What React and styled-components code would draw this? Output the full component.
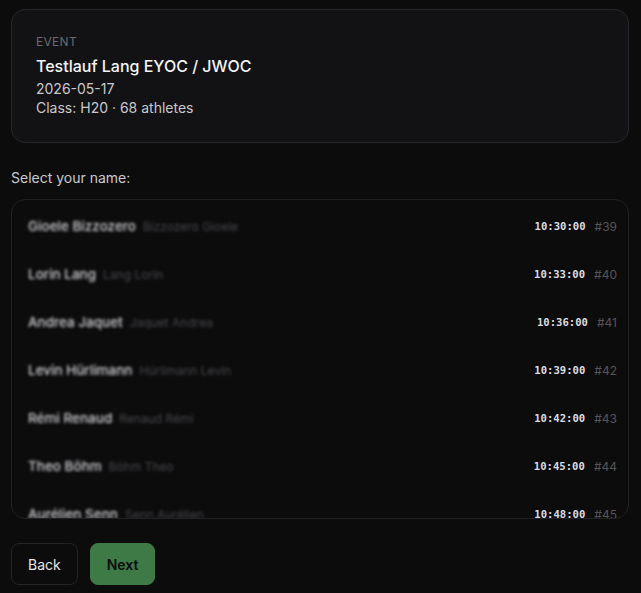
import React from 'react';
import styled, { createGlobalStyle } from 'styled-components';

const GlobalStyle = createGlobalStyle`
    body {
        margin: 0;
        background: #0c0c0d;
        font-family: Inter, "Noto Sans", sans-serif;
        color: #e6e6e6;
    }
`

const Page = styled.div`
    display: flex;
    flex-direction: column;
    padding: 9px 12px 0 11px;
`

const EventCard = styled.section`
    display: flex;
    flex-direction: column;
    padding: 24px 24px 25px 24px;
    background: #121214;
    border: 1px solid #26262a;
    border-radius: 14px;
`

const Eyebrow = styled.div`
    font-size: 12px;
    line-height: 16px;
    letter-spacing: 0.3px;
    text-transform: uppercase;
    color: #6a6a6e;
`

const EventTitle = styled.div`
    margin-top: 5px;
    font-size: 16px;
    line-height: 22px;
    font-weight: 500;
    color: #f4f4f5;
`

const Meta = styled.div`
    margin-top: ${p => p.gap || 0}px;
    font-size: 14px;
    line-height: 19px;
    color: #c9c9cc;
`

const Prompt = styled.div`
    margin-top: 25px;
    font-size: 14px;
    line-height: 20px;
    color: #c9c9cc;
`

const List = styled.div`
    margin-top: 11px;
    height: 320px;
    padding-top: 2px;
    box-sizing: border-box;
    overflow: hidden;
    border: 1px solid #222225;
    border-radius: 14px;
    background: #0c0c0d;
`

const Row = styled.div`
    display: flex;
    align-items: center;
    height: 48px;
    padding: 0 11px 0 16px;
    box-sizing: border-box;
`

const Names = styled.div`
    display: flex;
    align-items: baseline;
    gap: 7px;
    flex: 1;
    filter: blur(1.4px);
`

const Name = styled.span`
    font-size: 13.5px;
    font-weight: 500;
    color: #d4d4d8;
`

const Alias = styled.span`
    font-size: 12px;
    color: #48484c;
`

const Start = styled.span`
    font-family: "DejaVu Sans Mono", "Liberation Mono", monospace;
    font-size: 10.6px;
    font-weight: 600;
    color: #dcdce0;
`

const Bib = styled.span`
    margin-left: 9px;
    font-size: 12px;
    color: #55555a;
`

const Actions = styled.div`
    display: flex;
    gap: 12px;
    margin-top: 24px;
`

const Button = styled.button`
    height: 42px;
    padding: 0 16px;
    border-radius: 8px;
    font-family: Inter, "Noto Sans", sans-serif;
    font-size: 14px;
    font-weight: ${p => p.primary ? 600 : 400};
    color: ${p => p.primary ? '#0d0d0d' : '#e6e6e6'};
    background: ${p => p.primary ? '#3d7a45' : 'transparent'};
    border: 1px solid ${p => p.primary ? '#3d7a45' : '#242427'};
    cursor: pointer;
`

const athletes = [
    { name: 'Gioele Bizzozero', alias: 'Bizzozero Gioele', start: '10:30:00', bib: 39 },
    { name: 'Lorin Lang', alias: 'Lang Lorin', start: '10:33:00', bib: 40 },
    { name: 'Andrea Jaquet', alias: 'Jaquet Andrea', start: '10:36:00', bib: 41 },
    { name: 'Levin Hürlimann', alias: 'Hürlimann Levin', start: '10:39:00', bib: 42 },
    { name: 'Rémi Renaud', alias: 'Renaud Rémi', start: '10:42:00', bib: 43 },
    { name: 'Theo Böhm', alias: 'Böhm Theo', start: '10:45:00', bib: 44 },
    { name: 'Aurélien Senn', alias: 'Senn Aurélien', start: '10:48:00', bib: 45 },
    { name: 'Noah Keller', alias: 'Keller Noah', start: '10:51:00', bib: 46 },
]

export default function App() {
    return (
        <Page>
            <GlobalStyle />
            <EventCard>
                <Eyebrow>Event</Eyebrow>
                <EventTitle>Testlauf Lang EYOC / JWOC</EventTitle>
                <Meta gap={2}>2026-05-17</Meta>
                <Meta>Class: H20 · 68 athletes</Meta>
            </EventCard>
            <Prompt>Select your name:</Prompt>
            <List>
                {athletes.map(a => (
                    <Row key={a.bib}>
                        <Names>
                            <Name>{a.name}</Name>
                            <Alias>{a.alias}</Alias>
                        </Names>
                        <Start>{a.start}</Start>
                        <Bib>#{a.bib}</Bib>
                    </Row>
                ))}
            </List>
            <Actions>
                <Button>Back</Button>
                <Button primary>Next</Button>
            </Actions>
        </Page>
    )
}
